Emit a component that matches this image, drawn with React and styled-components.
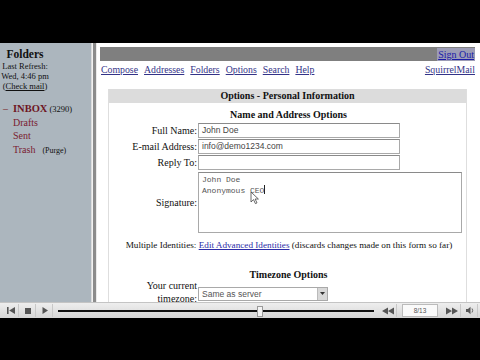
import styled, { createGlobalStyle } from 'styled-components';

const GlobalStyle = createGlobalStyle`
  html, body {
    margin: 0;
    padding: 0;
    background: #000;
  }
  body {
    width: 480px;
    height: 360px;
    overflow: hidden;
    font-family: "Liberation Serif", "Times New Roman", serif;
  }
`;

const folders = [
  { name: 'Drafts' },
  { name: 'Sent' },
  { name: 'Trash', extra: '(Purge)' },
];

const navLinks = ['Compose', 'Addresses', 'Folders', 'Options', 'Search', 'Help'];

function App() {
  return (
    <>
      <GlobalStyle />
      <Screen>
        <TopBlack />
        <Middle>
          <Sidebar>
            <SideHead>
              <FoldersTitle>Folders</FoldersTitle>
              <SmallLine>Last Refresh:</SmallLine>
              <SmallLine>Wed, 4:46 pm</SmallLine>
              <SmallLine>
                (<u>Check mail</u>)
              </SmallLine>
            </SideHead>
            <FolderList>
              <FolderRow>
                <Dash>–</Dash>
                <Inbox>INBOX</Inbox>
                <Count>(3290)</Count>
              </FolderRow>
              {folders.map(f => (
                <FolderRow key={f.name} $indent>
                  <FolderLink>{f.name}</FolderLink>
                  {f.extra && <Purge>{f.extra}</Purge>}
                </FolderRow>
              ))}
            </FolderList>
          </Sidebar>
          <Divider />
          <Main>
            <TitleBar>
              <SignOut>Sign Out</SignOut>
            </TitleBar>
            <NavRow>
              <NavLinks>
                {navLinks.map(l => (
                  <NavLink key={l}>{l}</NavLink>
                ))}
              </NavLinks>
              <NavLink>SquirrelMail</NavLink>
            </NavRow>

            <OptionsBox>
              <BoxHeader>Options - Personal Information</BoxHeader>
              <SectionTitle>Name and Address Options</SectionTitle>
              <FieldRow>
                <Label>Full Name:</Label>
                <TextInput>John Doe</TextInput>
              </FieldRow>
              <FieldRow>
                <Label>E-mail Address:</Label>
                <TextInput>info@demo1234.com</TextInput>
              </FieldRow>
              <FieldRow>
                <Label>Reply To:</Label>
                <TextInput />
              </FieldRow>
              <SignatureRow>
                <Label>Signature:</Label>
                <SignatureBox>
                  <SigText>
                    John Doe{'\n'}Anonymous CEO<Caret />
                  </SigText>
                  <Pointer viewBox="0 0 10 14">
                    <path
                      d="M1 1 L1 11 L3.5 8.6 L5.4 12.6 L7 11.9 L5.1 8 L8.4 8 Z"
                      fill="#fff"
                      stroke="#444"
                      strokeWidth="0.8"
                      strokeLinejoin="round"
                    />
                  </Pointer>
                </SignatureBox>
              </SignatureRow>
              <Identities>
                Multiple Identities: <BlueLink>Edit Advanced Identities</BlueLink>{' '}
                (discards changes made on this form so far)
              </Identities>
              <SectionTitle $gap>Timezone Options</SectionTitle>
              <TimezoneRow>
                <Label>
                  <WrapLabel>Your current timezone:</WrapLabel>
                </Label>
                <Select>
                  <span>Same as server</span>
                  <SelectButton>
                    <svg width="5" height="4" viewBox="0 0 5 4">
                      <path d="M0 0 L5 0 L2.5 3 Z" fill="#333" />
                    </svg>
                  </SelectButton>
                </Select>
              </TimezoneRow>
            </OptionsBox>
          </Main>
        </Middle>

        <Player>
          <PlayerButton>
            <svg width="10" height="9" viewBox="0 0 10 9">
              <rect x="1" y="1" width="1.6" height="7" fill="#555" />
              <path d="M9 1 L9 8 L3.2 4.5 Z" fill="#555" />
            </svg>
          </PlayerButton>
          <PlayerButton>
            <svg width="8" height="8" viewBox="0 0 8 8">
              <rect x="1" y="1" width="6" height="6" fill="#555" />
            </svg>
          </PlayerButton>
          <PlayerButton>
            <svg width="8" height="9" viewBox="0 0 8 9">
              <path d="M1.5 1 L7 4.5 L1.5 8 Z" fill="#555" />
            </svg>
          </PlayerButton>
          <Track>
            <TrackLine />
            <Knob style={{ left: '63%' }} />
          </Track>
          <PlayerButton $wide>
            <svg width="14" height="8" viewBox="0 0 14 8">
              <path d="M7 0.5 L7 7.5 L1 4 Z M13 0.5 L13 7.5 L7 4 Z" fill="#555" />
            </svg>
          </PlayerButton>
          <Counter>8/13</Counter>
          <PlayerButton $wide>
            <svg width="14" height="8" viewBox="0 0 14 8">
              <path d="M1 0.5 L1 7.5 L7 4 Z M7 0.5 L7 7.5 L13 4 Z" fill="#555" />
            </svg>
          </PlayerButton>
          <PlayerButton>
            <svg width="10" height="9" viewBox="0 0 10 9">
              <path d="M1 3 L3 3 L5.5 0.8 L5.5 8.2 L3 6 L1 6 Z" fill="#555" />
              <path d="M7 2.5 Q8.4 4.5 7 6.5" stroke="#555" fill="none" strokeWidth="0.9" />
            </svg>
          </PlayerButton>
        </Player>
        <BottomBlack />
      </Screen>
    </>
  );
}

const Screen = styled.div`
  width: 480px;
  height: 360px;
  display: flex;
  flex-direction: column;
  background: #000;
`;

const TopBlack = styled.div`
  height: 43px;
  flex-shrink: 0;
  background: #000;
`;

const BottomBlack = styled.div`
  flex: 1;
  background: #000;
`;

const Middle = styled.div`
  height: 259px;
  flex-shrink: 0;
  display: flex;
  overflow: hidden;
`;

const Sidebar = styled.div`
  width: 91px;
  flex-shrink: 0;
  background: #acb6be;
  padding-top: 5px;
  box-sizing: border-box;
  color: #111;
`;

const SideHead = styled.div`
  width: 50px;
  text-align: center;
`;

const FoldersTitle = styled.div`
  font-weight: bold;
  font-size: 11.5px;
  line-height: 13px;
`;

const SmallLine = styled.div`
  font-size: 8.5px;
  line-height: 10px;
  white-space: nowrap;
`;

const FolderList = styled.div`
  margin-top: 12px;
  display: flex;
  flex-direction: column;
  gap: 1px;
`;

const FolderRow = styled.div`
  display: flex;
  align-items: baseline;
  gap: 3px;
  padding-left: ${props => (props.$indent ? '13px' : '3px')};
  font-size: 10px;
  line-height: 12.5px;
  white-space: nowrap;
`;

const Dash = styled.span`
  color: #7a1f2b;
  width: 7px;
`;

const Inbox = styled.span`
  color: #6e1522;
  font-weight: bold;
  font-size: 10.5px;
`;

const Count = styled.span`
  font-size: 8.5px;
  margin-left: -1px;
`;

const FolderLink = styled.span`
  color: #7a2030;
`;

const Purge = styled.span`
  font-size: 8px;
  margin-left: 4px;
`;

const Divider = styled.div`
  width: 6px;
  flex-shrink: 0;
  box-sizing: border-box;
  background: #f2f2f2;
  border-left: 1px solid #dcdcdc;
  border-right: 1px solid #eaeaea;
  display: flex;
  justify-content: flex-end;
  &::after {
    content: '';
    width: 3px;
    background: #8c8c8c;
  }
`;

const Main = styled.div`
  flex: 1;
  background: #fff;
  padding: 4px 5px 0 3px;
  overflow: hidden;
  color: #111;
  font-size: 10px;
`;

const TitleBar = styled.div`
  height: 14px;
  background: #7f7f7f;
  display: flex;
  justify-content: flex-end;
  align-items: center;
`;

const SignOut = styled.span`
  background: #9c9cb6;
  color: #1a1aa8;
  text-decoration: underline;
  font-size: 10px;
  line-height: 13px;
  padding: 0 1px;
`;

const NavRow = styled.div`
  display: flex;
  justify-content: space-between;
  margin-top: 2px;
  line-height: 14px;
  padding-left: 1px;
`;

const NavLinks = styled.div`
  display: flex;
  gap: 6px;
`;

const NavLink = styled.span`
  color: #333388;
  text-decoration: underline;
  font-size: 9.8px;
`;

const OptionsBox = styled.div`
  margin: 12px 8px 0 8px;
  border-left: 1px solid #dedede;
  border-right: 1px solid #dedede;
  height: 300px;
`;

const BoxHeader = styled.div`
  background: #dcdcdc;
  height: 14px;
  line-height: 14px;
  text-align: center;
  font-weight: bold;
  font-size: 10px;
`;

const SectionTitle = styled.div`
  text-align: center;
  font-weight: bold;
  font-size: 10px;
  line-height: 14px;
  margin-top: ${props => (props.$gap ? '16px' : '5px')};
  padding-left: 2px;
`;

const FieldRow = styled.div`
  display: flex;
  align-items: center;
  height: 16px;
`;

const Label = styled.div`
  width: 89px;
  flex-shrink: 0;
  text-align: right;
  font-size: 10px;
  padding-right: 1px;
  box-sizing: border-box;
  white-space: nowrap;
`;

const TextInput = styled.div`
  width: 202px;
  height: 15px;
  box-sizing: border-box;
  border: 1px solid #a9a9a9;
  border-top-color: #8a8a8a;
  font-family: "Liberation Sans", Arial, sans-serif;
  font-size: 8.5px;
  line-height: 13px;
  padding-left: 3px;
  color: #444;
`;

const SignatureRow = styled.div`
  display: flex;
  align-items: center;
  margin-top: 2px;
`;

const SignatureBox = styled.div`
  position: relative;
  width: 264px;
  height: 61px;
  box-sizing: border-box;
  border: 1px solid #a9a9a9;
  border-top-color: #8a8a8a;
  padding: 2px 3px;
`;

const SigText = styled.div`
  font-family: "Liberation Mono", "Courier New", monospace;
  font-size: 8px;
  line-height: 10px;
  color: #555;
  white-space: pre;
`;

const Caret = styled.span`
  display: inline-block;
  width: 1px;
  height: 9px;
  background: #222;
  vertical-align: -1px;
`;

const Pointer = styled.svg`
  position: absolute;
  left: 51px;
  top: 18px;
  width: 10px;
  height: 14px;
`;

const Identities = styled.div`
  margin-top: 5px;
  line-height: 14px;
  font-size: 9.2px;
  text-align: center;
  padding-left: 3px;
  white-space: nowrap;
`;

const BlueLink = styled.span`
  color: #2d2da8;
  text-decoration: underline;
`;

const TimezoneRow = styled.div`
  display: flex;
  align-items: flex-start;
  margin-top: -2px;
`;

const WrapLabel = styled.div`
  width: 52px;
  margin-left: auto;
  white-space: normal;
  line-height: 12.5px;
  text-align: right;
`;

const Select = styled.div`
  width: 130px;
  height: 14px;
  box-sizing: border-box;
  border: 1px solid #a9a9a9;
  display: flex;
  align-items: center;
  justify-content: space-between;
  font-family: "Liberation Sans", Arial, sans-serif;
  font-size: 8.5px;
  color: #555;
  padding-left: 3px;
  margin-top: 7px;
`;

const SelectButton = styled.div`
  width: 9px;
  height: 12px;
  background: #d8d8d8;
  border-left: 1px solid #bbb;
  display: flex;
  align-items: center;
  justify-content: center;
`;

const Player = styled.div`
  height: 16px;
  flex-shrink: 0;
  display: flex;
  align-items: center;
  gap: 2px;
  padding: 0 2px 0 4px;
  box-sizing: border-box;
  background: linear-gradient(#eeeeee, #d6d6d6);
  border-top: 1px solid #c4c4c4;
`;

const PlayerButton = styled.div`
  width: ${props => (props.$wide ? '17px' : '14px')};
  height: 13px;
  display: flex;
  align-items: center;
  justify-content: center;
  border-right: 1px solid #c8c8c8;
  flex-shrink: 0;
`;

const Track = styled.div`
  position: relative;
  flex: 1;
  height: 14px;
  margin: 0 3px;
  display: flex;
  align-items: center;
`;

const TrackLine = styled.div`
  width: 100%;
  height: 2px;
  background: #111;
`;

const Knob = styled.div`
  position: absolute;
  top: 2px;
  width: 4px;
  height: 9px;
  background: #f4f4f4;
  border: 1px solid #999;
`;

const Counter = styled.div`
  width: 34px;
  height: 11px;
  background: #fafafa;
  border: 1px solid #bbb;
  font-family: "Liberation Sans", Arial, sans-serif;
  font-size: 6.5px;
  line-height: 11px;
  text-align: center;
  color: #555;
  margin: 0 3px;
`;

export default App;
